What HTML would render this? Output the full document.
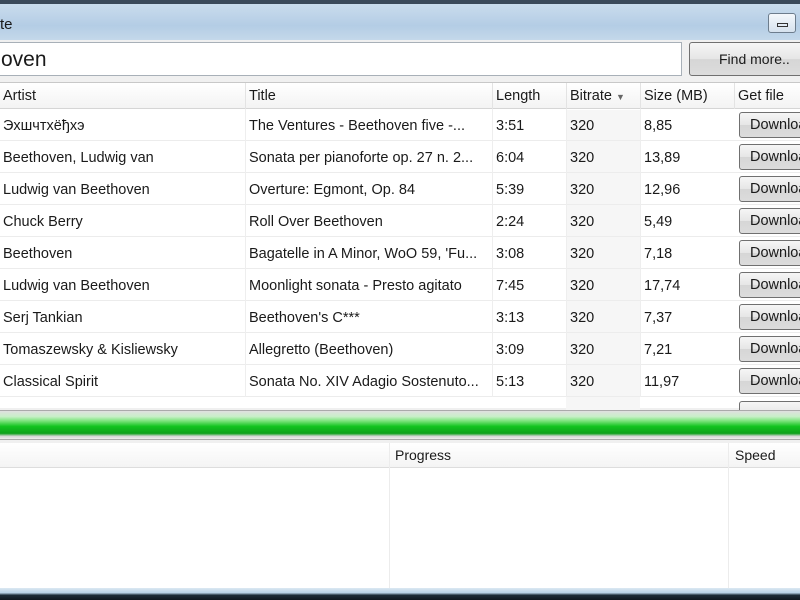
<!DOCTYPE html><html><head><style>
*{margin:0;padding:0;box-sizing:border-box}
body{width:800px;height:600px;overflow:hidden;background:#f0f0f0;font-family:"Liberation Sans",sans-serif;font-size:14px;color:#1a1a1a;position:relative}
.abs{position:absolute}
.title{left:0;top:0;width:800px;height:40px;background:linear-gradient(#c9dced,#b4cde5 60%,#c4d8ea);border-top:4px solid #3a4a5a}
.title span{position:absolute;left:0;top:12px;font-size:15px}
.min{left:768px;top:13px;width:28px;height:20px;border:1px solid #6d7d8d;border-radius:3px;background:linear-gradient(#f4f8fc,#d6e2ee)}
.min i{position:absolute;left:8px;top:9px;width:11px;height:4px;border:1px solid #333}
.search{left:-2px;top:42px;width:684px;height:34px;background:#fff;border:1px solid #a8b0b8}
.search span{position:absolute;left:2px;top:5px;font-size:21px}
.btn{border:1px solid #707070;border-radius:3px;background:linear-gradient(#f6f6f6 0,#e6e6e6 50%,#d6d6d6 51%,#dcdcdc)}
.find{left:689px;top:42px;width:120px;height:34px;font-size:14px;padding:8px 0 0 29px}
.grid{left:0;top:82px;width:800px;height:326px;background:#fff;border-top:1px solid #c8c8c8}
.hdr{position:absolute;top:0;height:26px;width:800px;background:linear-gradient(#fff,#f3f3f3);border-bottom:1px solid #d5d5d5}
.c{position:absolute;padding-left:3px;white-space:nowrap;overflow:hidden;font-size:14.5px}
.hdr .c{border-left:1px solid #e3e3e3;height:26px;top:0;padding-top:5px}
.row{position:absolute;left:0;width:800px;height:32px;border-bottom:1px solid #ececec}
.row .c{top:0;height:32px;padding-top:9px;border-left:1px solid #eee}
.sort{position:absolute;left:566px;top:27px;width:74px;height:300px;background:#f6f6f6}
.dl{position:absolute;left:739px;top:3px;width:70px;height:26px;padding:4px 0 0 10px;font-size:14.5px}
.bar{left:0;top:410px;width:800px;height:30px;border-top:1px solid #aaa;border-bottom:1px solid #aaa;background:linear-gradient(#e0e0e0 0,#c8f0c8 20%,#7ee47e 35%,#13c41f 55%,#0ea11b 80%,#d4d4d4 90%,#eee)}
.list{left:0;top:443px;width:800px;height:147px;background:#fff}
.list .h{position:absolute;top:0;height:25px;width:800px;background:linear-gradient(#fff,#f4f4f4);border-bottom:1px solid #ddd}
.vl{position:absolute;top:0;width:1px;height:147px;background:#ececec}
.foot{left:0;top:588px;width:800px;height:12px;background:linear-gradient(#dbe8f2 0,#b9d2e6 40%,#1d2b38 60%,#101820)}
</style></head><body>
<div class="abs title"><span>te</span></div>
<div class="abs min"><i></i></div>
<div class="abs search"><span>oven</span></div>
<div class="abs btn find">Find more..</div>
<div class="abs grid">
<div class="sort"></div>
<div class="hdr">
<div class="c" style="left:0;width:245px;border:0">Artist</div>
<div class="c" style="left:245px;width:247px">Title</div>
<div class="c" style="left:492px;width:74px">Length</div>
<div class="c" style="left:566px;width:74px">Bitrate <span style="font-size:9px;color:#666">&#9660;</span></div>
<div class="c" style="left:640px;width:94px">Size (MB)</div>
<div class="c" style="left:734px;width:70px">Get file</div>
</div>
<div style="position:absolute;top:26px;left:0;width:800px">
<div class="row" style="top:0"><div class="c" style="left:0;width:245px;border:0">Эхшчтхёђхэ</div><div class="c" style="left:245px;width:247px">The Ventures - Beethoven five -...</div><div class="c" style="left:492px;width:74px">3:51</div><div class="c" style="left:566px;width:74px">320</div><div class="c" style="left:640px;width:94px">8,85</div><div class="btn dl">Download</div></div>
<div class="row" style="top:32px"><div class="c" style="left:0;width:245px;border:0">Beethoven, Ludwig van</div><div class="c" style="left:245px;width:247px">Sonata per pianoforte op. 27 n. 2...</div><div class="c" style="left:492px;width:74px">6:04</div><div class="c" style="left:566px;width:74px">320</div><div class="c" style="left:640px;width:94px">13,89</div><div class="btn dl">Download</div></div>
<div class="row" style="top:64px"><div class="c" style="left:0;width:245px;border:0">Ludwig van Beethoven</div><div class="c" style="left:245px;width:247px">Overture: Egmont, Op. 84</div><div class="c" style="left:492px;width:74px">5:39</div><div class="c" style="left:566px;width:74px">320</div><div class="c" style="left:640px;width:94px">12,96</div><div class="btn dl">Download</div></div>
<div class="row" style="top:96px"><div class="c" style="left:0;width:245px;border:0">Chuck Berry</div><div class="c" style="left:245px;width:247px">Roll Over Beethoven</div><div class="c" style="left:492px;width:74px">2:24</div><div class="c" style="left:566px;width:74px">320</div><div class="c" style="left:640px;width:94px">5,49</div><div class="btn dl">Download</div></div>
<div class="row" style="top:128px"><div class="c" style="left:0;width:245px;border:0">Beethoven</div><div class="c" style="left:245px;width:247px">Bagatelle in A Minor, WoO 59, 'Fu...</div><div class="c" style="left:492px;width:74px">3:08</div><div class="c" style="left:566px;width:74px">320</div><div class="c" style="left:640px;width:94px">7,18</div><div class="btn dl">Download</div></div>
<div class="row" style="top:160px"><div class="c" style="left:0;width:245px;border:0">Ludwig van Beethoven</div><div class="c" style="left:245px;width:247px">Moonlight sonata - Presto agitato</div><div class="c" style="left:492px;width:74px">7:45</div><div class="c" style="left:566px;width:74px">320</div><div class="c" style="left:640px;width:94px">17,74</div><div class="btn dl">Download</div></div>
<div class="row" style="top:192px"><div class="c" style="left:0;width:245px;border:0">Serj Tankian</div><div class="c" style="left:245px;width:247px">Beethoven's C***</div><div class="c" style="left:492px;width:74px">3:13</div><div class="c" style="left:566px;width:74px">320</div><div class="c" style="left:640px;width:94px">7,37</div><div class="btn dl">Download</div></div>
<div class="row" style="top:224px"><div class="c" style="left:0;width:245px;border:0">Tomaszewsky &amp; Kisliewsky</div><div class="c" style="left:245px;width:247px">Allegretto (Beethoven)</div><div class="c" style="left:492px;width:74px">3:09</div><div class="c" style="left:566px;width:74px">320</div><div class="c" style="left:640px;width:94px">7,21</div><div class="btn dl">Download</div></div>
<div class="row" style="top:256px"><div class="c" style="left:0;width:245px;border:0">Classical Spirit</div><div class="c" style="left:245px;width:247px">Sonata No. XIV Adagio Sostenuto...</div><div class="c" style="left:492px;width:74px">5:13</div><div class="c" style="left:566px;width:74px">320</div><div class="c" style="left:640px;width:94px">11,97</div><div class="btn dl">Download</div></div>
<div class="row" style="top:288px;border:0"><div class="btn dl" style="top:4px"></div></div>
</div>
</div>
<div class="abs bar"></div>
<div class="abs list"><div class="h"><span style="position:absolute;left:395px;top:4px">Progress</span><span style="position:absolute;left:735px;top:4px">Speed</span></div><div class="vl" style="left:389px"></div><div class="vl" style="left:728px"></div></div>
<div class="abs foot"></div>
</body></html>
